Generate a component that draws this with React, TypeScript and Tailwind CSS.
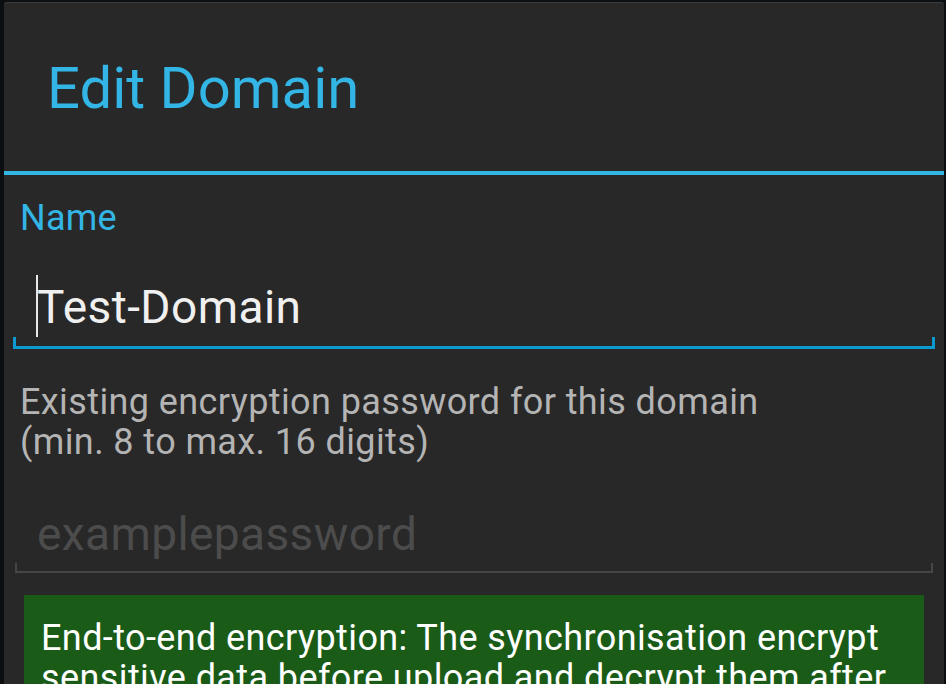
import React from "react";

export default function App() {
  return (
    <div
      className="w-[946px] h-[684px] overflow-hidden bg-[#0b0f12] pt-[2px] pl-[4px] pr-[2px]"
      style={{ fontFamily: "Roboto, 'Noto Sans', sans-serif" }}
    >
      <div className="h-[700px] bg-[#282828] rounded-t-[3px] border-t border-[#3c3c3c]">
        <div className="h-[168px] pl-[43px] pt-[56px]">
          <div className="text-[58px] leading-none text-[#33b5e5]">Edit Domain</div>
        </div>
        <div className="h-[4px] bg-[#33b5e5]" />
        <div className="pl-[16px] mt-[25px] text-[36px] leading-none tracking-[0.2px] text-[#33b5e5]">Name</div>
        <div className="relative mt-[48px] mx-[9px]">
          <div className="absolute left-[23px] top-[-9px] w-[2px] h-[62px] bg-[#e8e8e8]" />
          <div className="pl-[24px] text-[46px] leading-none tracking-[0.45px] text-[#f0f0f0]">Test-Domain</div>
          <div className="mt-[7px] h-[12px] border-l-[3px] border-r-[3px] border-b-[3px] border-[#0a9ad0]" />
        </div>
        <div className="pl-[16px] mt-[33px] text-[36px] leading-[40px] tracking-[0.4px] text-[#b4b4b4]">
          <div>Existing encryption password for this domain</div>
          <div>(min. 8 to max. 16 digits)</div>
        </div>
        <div className="mt-[49px] ml-[11px] mr-[11px]">
          <div className="pl-[22px] text-[46px] leading-none tracking-[0.4px] text-[#4c4c4c]">examplepassword</div>
          <div className="mt-[6px] h-[10px] border-l-2 border-r-2 border-b-2 border-[#464646]" />
        </div>
        <div className="mt-[22px] mx-[20px] bg-[#1a5b18] pl-[17px] pr-[10px] pt-[23px] text-[36px] leading-[40px] tracking-[0.4px] text-white">
          End-to-end encryption: The synchronisation encrypt sensitive data before upload and decrypt them after
          download.
        </div>
      </div>
    </div>
  );
}
